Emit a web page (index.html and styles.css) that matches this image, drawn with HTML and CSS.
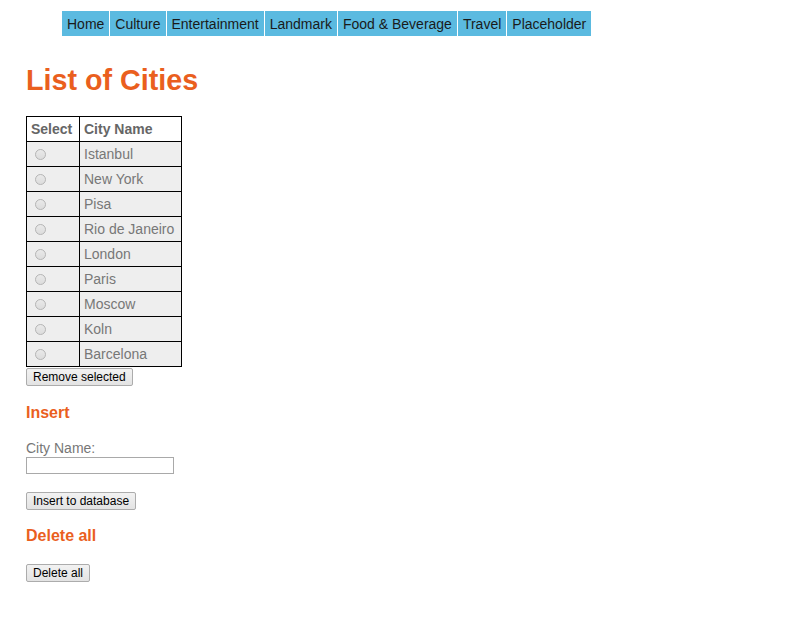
FILE: index.html
```html
<!DOCTYPE html>
<html>
<head>
<meta charset="utf-8">
<link rel="stylesheet" href="styles.css">
</head>
<body>
<nav class="nav">
  <a class="nav-item">Home</a>
  <a class="nav-item">Culture</a>
  <a class="nav-item">Entertainment</a>
  <a class="nav-item">Landmark</a>
  <a class="nav-item">Food &amp; Beverage</a>
  <a class="nav-item">Travel</a>
  <a class="nav-item">Placeholder</a>
</nav>
<main class="content">
  <h1 class="title">List of Cities</h1>
  <table class="cities">
    <thead>
      <tr><th class="col-select">Select</th><th class="col-name">City Name</th></tr>
    </thead>
    <tbody>
      <tr><td class="radio-cell"><span class="radio"></span></td><td>Istanbul</td></tr>
      <tr><td class="radio-cell"><span class="radio"></span></td><td>New York</td></tr>
      <tr><td class="radio-cell"><span class="radio"></span></td><td>Pisa</td></tr>
      <tr><td class="radio-cell"><span class="radio"></span></td><td>Rio de Janeiro</td></tr>
      <tr><td class="radio-cell"><span class="radio"></span></td><td>London</td></tr>
      <tr><td class="radio-cell"><span class="radio"></span></td><td>Paris</td></tr>
      <tr><td class="radio-cell"><span class="radio"></span></td><td>Moscow</td></tr>
      <tr><td class="radio-cell"><span class="radio"></span></td><td>Koln</td></tr>
      <tr><td class="radio-cell"><span class="radio"></span></td><td>Barcelona</td></tr>
    </tbody>
  </table>
  <button class="btn btn-remove">Remove selected</button>
  <h3 class="section-title insert-title">Insert</h3>
  <label class="field-label">City Name:</label>
  <div class="input-box"></div>
  <button class="btn btn-insert">Insert to database</button>
  <h3 class="section-title delete-title">Delete all</h3>
  <button class="btn btn-delete">Delete all</button>
</main>
</body>
</html>
```
FILE: styles.css
```css
html, body {
  margin: 0;
  padding: 0;
  background: #ffffff;
  font-family: "Liberation Sans", Arial, sans-serif;
}

.nav {
  display: flex;
  gap: 1px;
  margin: 11px 0 0 62px;
  width: max-content;
}

.nav-item {
  background: #5bbae0;
  color: #1a1a1a;
  font-size: 14px;
  height: 25px;
  line-height: 25px;
  padding: 1px 5px 0 5px;
  box-sizing: border-box;
}

.content {
  padding-left: 26px;
  display: flex;
  flex-direction: column;
  align-items: flex-start;
}

.title {
  color: #ea5f1e;
  font-size: 28.7px;
  font-weight: bold;
  line-height: 32px;
  margin: 28px 0 0 0;
}

.cities {
  border-collapse: collapse;
  margin-top: 20px;
  font-size: 14px;
  color: #777777;
}

.cities th,
.cities td {
  border: 1px solid #000000;
  height: 25px;
  padding: 0 4px;
  text-align: left;
  box-sizing: border-box;
}

.cities th {
  background: #ffffff;
  color: #666666;
  font-weight: bold;
}

.cities td {
  background: #eeeeee;
}

.col-select { width: 53px; }
.col-name { width: 102px; }

.radio-cell {
  padding-left: 8px !important;
}

.radio {
  display: block;
  width: 11px;
  height: 11px;
  border-radius: 50%;
  border: 1px solid #b5b5b5;
  background: linear-gradient(#e9e9e9, #dcdcdc);
  box-sizing: border-box;
}

.btn {
  font-family: "Liberation Sans", Arial, sans-serif;
  font-size: 12px;
  color: #000000;
  background: linear-gradient(#f2f2f2, #e3e3e3);
  border: 1px solid #acacac;
  border-radius: 2px;
  padding: 0 6px;
  height: 18px;
  line-height: 16px;
}

.btn-remove {
  margin-top: 1px;
}

.section-title {
  color: #ea5f1e;
  font-size: 16px;
  font-weight: bold;
  margin: 0;
  line-height: 20px;
}

.insert-title {
  margin-top: 17px;
}

.field-label {
  color: #777777;
  font-size: 14px;
  margin-top: 17px;
  line-height: 16px;
}

.input-box {
  width: 148px;
  height: 17px;
  border: 1px solid #a9a9a9;
  box-sizing: border-box;
  background: #ffffff;
  margin-top: 1px;
}

.btn-insert {
  margin-top: 18px;
}

.delete-title {
  margin-top: 16px;
}

.btn-delete {
  margin-top: 18px;
}
```
